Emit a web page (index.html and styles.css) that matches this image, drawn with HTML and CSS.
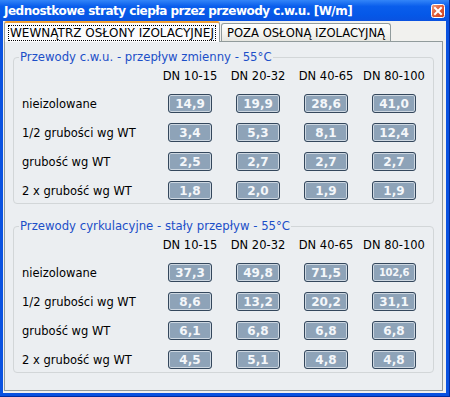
FILE: index.html
```html
<!DOCTYPE html>
<html lang="pl">
<head>
<meta charset="utf-8">
<title>Jednostkowe straty ciepła</title>
<link rel="stylesheet" href="styles.css">
</head>
<body>
<div class="window">
  <div class="titlebar">
    <span class="title">Jednostkowe straty ciepła przez przewody c.w.u. [W/m]</span>
    <span class="close">
      <svg width="14" height="14" viewBox="0 0 14 14">
        <defs>
          <linearGradient id="cg" x1="0" y1="0" x2="1" y2="1">
            <stop offset="0" stop-color="#F0A080"/>
            <stop offset="0.5" stop-color="#E05A36"/>
            <stop offset="1" stop-color="#C8401E"/>
          </linearGradient>
        </defs>
        <rect x="0.5" y="0.5" width="13" height="13" rx="2" fill="url(#cg)" stroke="#FFFFFF"/>
        <path d="M4 4 L10 10 M10 4 L4 10" stroke="#FFFFFF" stroke-width="2" stroke-linecap="square"/>
      </svg>
    </span>
  </div>
  <div class="client">
    <div class="tabs">
      <div class="tab active"><span class="focus">WEWNĄTRZ OSŁONY IZOLACYJNEJ</span></div>
      <div class="tab">POZA OSŁONĄ IZOLACYJNĄ</div>
    </div>
    <div class="panel">
      <fieldset class="group">
        <legend>Przewody c.w.u. - przepływ zmienny - 55°C</legend>
        <div class="grid">
          <div class="hd"></div><div class="hd">DN 10-15</div><div class="hd">DN 20-32</div><div class="hd">DN 40-65</div><div class="hd">DN 80-100</div>
          <div class="lbl">nieizolowane</div><div class="cell"><span class="val">14,9</span></div><div class="cell"><span class="val">19,9</span></div><div class="cell"><span class="val">28,6</span></div><div class="cell"><span class="val">41,0</span></div>
          <div class="lbl">1/2 grubości wg WT</div><div class="cell"><span class="val">3,4</span></div><div class="cell"><span class="val">5,3</span></div><div class="cell"><span class="val">8,1</span></div><div class="cell"><span class="val">12,4</span></div>
          <div class="lbl">grubość wg WT</div><div class="cell"><span class="val">2,5</span></div><div class="cell"><span class="val">2,7</span></div><div class="cell"><span class="val">2,7</span></div><div class="cell"><span class="val">2,7</span></div>
          <div class="lbl">2 x grubość wg WT</div><div class="cell"><span class="val">1,8</span></div><div class="cell"><span class="val">2,0</span></div><div class="cell"><span class="val">1,9</span></div><div class="cell"><span class="val">1,9</span></div>
        </div>
      </fieldset>
      <fieldset class="group">
        <legend>Przewody cyrkulacyjne - stały przepływ - 55°C</legend>
        <div class="grid">
          <div class="hd"></div><div class="hd">DN 10-15</div><div class="hd">DN 20-32</div><div class="hd">DN 40-65</div><div class="hd">DN 80-100</div>
          <div class="lbl">nieizolowane</div><div class="cell"><span class="val">37,3</span></div><div class="cell"><span class="val">49,8</span></div><div class="cell"><span class="val">71,5</span></div><div class="cell"><span class="val small">102,6</span></div>
          <div class="lbl">1/2 grubości wg WT</div><div class="cell"><span class="val">8,6</span></div><div class="cell"><span class="val">13,2</span></div><div class="cell"><span class="val">20,2</span></div><div class="cell"><span class="val">31,1</span></div>
          <div class="lbl">grubość wg WT</div><div class="cell"><span class="val">6,1</span></div><div class="cell"><span class="val">6,8</span></div><div class="cell"><span class="val">6,8</span></div><div class="cell"><span class="val">6,8</span></div>
          <div class="lbl">2 x grubość wg WT</div><div class="cell"><span class="val">4,5</span></div><div class="cell"><span class="val">5,1</span></div><div class="cell"><span class="val">4,8</span></div><div class="cell"><span class="val">4,8</span></div>
        </div>
      </fieldset>
    </div>
  </div>
</div>
</body>
</html>
```

FILE: styles.css
```css
* { box-sizing: border-box; }
html, body { margin: 0; padding: 0; }
body {
  width: 450px;
  height: 397px;
  overflow: hidden;
  font-family: "DejaVu Sans", Verdana, sans-serif;
  font-size: 11.5px;
  color: #000;
}
.window {
  width: 450px;
  height: 397px;
  background: #0A52E0;
  display: flex;
  flex-direction: column;
  border-right: 1px solid #002C9E;
  border-bottom: 1px solid #002C9E;
}
.titlebar {
  height: 21px;
  flex: none;
  display: flex;
  align-items: center;
  justify-content: space-between;
  padding: 0 4px 0 4px;
  background: linear-gradient(#3385F8, #0A5EEC 30%, #0558E8 70%, #0A52E0);
  color: #fff;
}
.title {
  font-weight: bold;
  font-size: 12px;
  letter-spacing: -0.5px;
}
.close { display: flex; }
.client {
  flex: 1;
  margin: 0 3px 3px 3px;
  background: #F1F1EE;
  display: flex;
  flex-direction: column;
}
.tabs {
  display: flex;
  align-items: flex-end;
  padding-left: 1px;
  height: 20px;
  flex: none;
  position: relative;
  z-index: 1;
}
.tab {
  height: 18px;
  padding: 0 5px;
  display: flex;
  align-items: center;
  border: 1px solid #919B9C;
  border-bottom: none;
  border-radius: 3px 3px 0 0;
  background: linear-gradient(#FFFFFF, #F3F3EF 60%, #E6E6E0);
  margin-left: 1px;
  font-size: 11.6px;
}
.tab.active {
  height: 21px;
  margin-left: 0;
  margin-bottom: -1px;
  background: #FCFCFE;
  border-top: 2px solid #F1A035;
  padding: 0 4px;
  font-size: 12px;
}
.focus {
  outline: 1px dotted #000;
  outline-offset: 0;
  padding: 0 1px;
  line-height: 14px;
}
.panel {
  flex: 1;
  margin: 0 3px 2px 1px;
  border: 1px solid #919B9C;
  background: #EBEEF1;
  padding: 9px 8px 0 8px;
}
.group {
  margin: 0 0 16px 0;
  padding: 0 0 4px 0;
  border: 1px solid #D2D6D8;
  border-radius: 4px;
  min-width: 0;
}
legend {
  color: #1C4FC8;
  padding: 0 1px;
  margin-left: 5px;
  font-size: 11.7px;
  line-height: 13px;
}
.grid {
  display: grid;
  grid-template-columns: 134px repeat(4, 68px);
  grid-template-rows: 14px repeat(4, 29px);
  padding: 5px 0 0 8px;
}
.hd {
  text-align: center;
  line-height: 14px;
  white-space: nowrap;
}
.lbl, .cell {
  display: flex;
  align-items: center;
  margin-top: 6px;
  margin-bottom: -6px;
  white-space: nowrap;
}
.cell { justify-content: center; }
.val {
  width: 44px;
  height: 19px;
  border: 1px solid #34475C;
  border-radius: 3px;
  background: #8EA3B8;
  box-shadow: inset 0 0 0 1px #CDD7E1;
  color: #F4F7FA;
  font-weight: bold;
  font-size: 12px;
  display: flex;
  align-items: center;
  justify-content: center;
}
.val.small { font-size: 10px; letter-spacing: -0.3px; }
```
